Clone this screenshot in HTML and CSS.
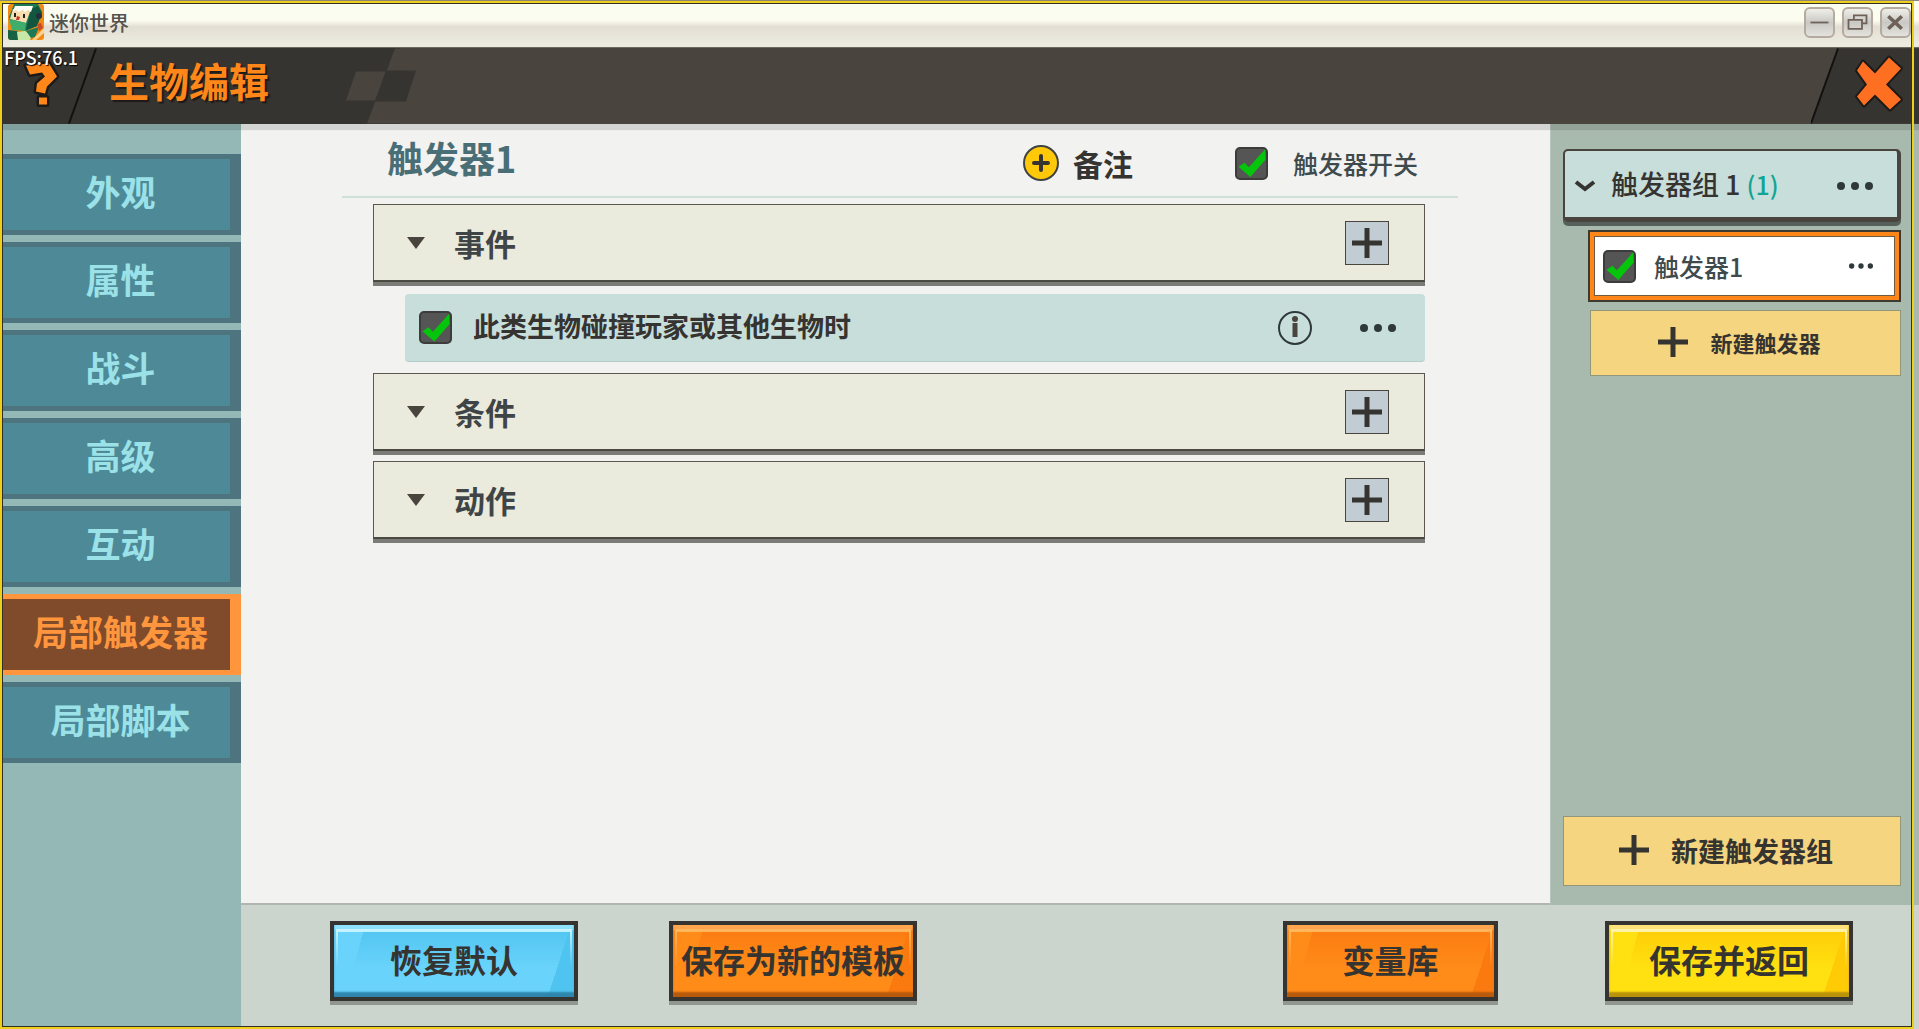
FILE: index.html
```
<!DOCTYPE html>
<html lang="zh-CN">
<head>
  <meta charset="UTF-8">
  <meta name="viewport" content="width=device-width, initial-scale=1.0">
  <title>迷你世界</title>
  <link rel="stylesheet" href="styles.css">
</head>
<body>
  <div class="window">
    <!-- Window title bar -->
    <div class="titlebar">
      <svg class="logo" viewBox="0 0 36 36" aria-hidden="true">
        <defs>
          <clipPath id="logo-clip"><rect width="36" height="36" rx="3"/></clipPath>
        </defs>
        <g clip-path="url(#logo-clip)">
          <rect width="36" height="36" fill="#f08a12"/>
          <path d="M6 0H30L34 8L29 22L18 27L4 21L1 13Z" fill="#1d7a55"/>
          <path d="M23 5L30 2L34 9L29 22L18 26Z" fill="#12563f"/>
          <path d="M5 5L23 5L18 19L2 15Z" fill="#f7deb0"/>
          <path d="M7 2L25 2L23 8L20 6L17 8L14 6L11 8L8 6L5 7Z" fill="#fffdf5"/>
          <path d="M6 9h2v4h-2zM15 10h2v4h-2z" fill="#222"/>
          <path d="M9 12l3 1l-1 3h-3z" fill="#c53a28"/>
          <path d="M1 15L18 19L17 27L4 26Z" fill="#3fae6b"/>
          <path d="M0 26L9 27L12 36H0Z" fill="#176245"/>
          <path d="M9 28L17 27L24 31L22 36H10Z" fill="#c8e8a8"/>
          <path d="M18 27L31 23L27 33L23 34Z" fill="#1d7a55"/>
          <path d="M29 20l4-1l2 5l-4 3z" fill="#c94b2a"/>
          <path d="M36 24L24 36H28L36 29Z" fill="#ffd08a"/>
          <circle cx="31" cy="12" r="3" fill="#20303c"/>
        </g>
      </svg>
      <span class="app-name">迷你世界</span>
      <div class="window-controls">
        <button class="win-btn" type="button" aria-label="最小化">
          <svg viewBox="0 0 30 30"><path d="M5 15h20" stroke-width="2"/></svg>
        </button>
        <button class="win-btn" type="button" aria-label="还原">
          <svg viewBox="0 0 30 30"><path d="M11 12V7h14v9h-4M5 12h15v10H5z" stroke-width="2"/></svg>
        </button>
        <button class="win-btn" type="button" aria-label="关闭窗口">
          <svg viewBox="0 0 30 30"><path d="M7 8l15 14M22 8L7 22" stroke-width="4"/></svg>
        </button>
      </div>
    </div>

    <!-- Page header -->
    <header class="header">
      <button class="help-btn" type="button" aria-label="帮助">
        <svg viewBox="0 0 90 75">
          <path d="M92 0L65 75" stroke="#12110f" stroke-width="2"/>
          <path d="M22 17L45 15L53 28L43 38L41 45L32 43L33 35L41 28L38 24L26 26ZM35 49h8v7h-8z" fill="#ff8619" stroke="#1c1b18" stroke-width="5" paint-order="stroke" stroke-linejoin="round"/>
        </svg>
      </button>
      <span class="fps">FPS:76.1</span>
      <h1 class="page-title">生物编辑</h1>
      <svg class="header-deco" viewBox="0 0 120 75" aria-hidden="true">
        <path d="M70 0H120V75H42Z" fill="#49453e"/>
        <path d="M31 23H61L50 52H21Z" fill="#49453e"/>
        <path d="M61 22H91L81 53H50Z" fill="#363430"/>
      </svg>
      <button class="close-btn" type="button" aria-label="关闭">
        <svg viewBox="0 0 108 75">
          <path d="M27 0H108V75H0Z" fill="#363430"/>
          <path d="M27 0L0 75" stroke="#12110f" stroke-width="2"/>
          <path d="M52 13L64 25L78 9L90 20L75 36L90 51L79 61L64 46L53 57L46 48L56 36L46 22Z" fill="#ff6f22" stroke="#1c1b18" stroke-width="4" paint-order="stroke" stroke-linejoin="round"/>
        </svg>
      </button>
    </header>

    <div class="body">
      <nav class="sidebar">
        <button class="tab" type="button">外观</button>
        <button class="tab" type="button">属性</button>
        <button class="tab" type="button">战斗</button>
        <button class="tab" type="button">高级</button>
        <button class="tab" type="button">互动</button>
        <button class="tab active" type="button">局部触发器</button>
        <button class="tab" type="button">局部脚本</button>
      </nav>

      <div class="workspace">
        <main class="editor">
          <div class="editor-head">
            <h2>触发器1</h2>
            <button class="note-btn" type="button">
              <svg viewBox="0 0 36 36" aria-hidden="true">
                <circle cx="18" cy="18" r="17" fill="#ffc90a" stroke="#3f4442" stroke-width="2"/>
                <path d="M18 11v14M11 18h14" stroke="#363430" stroke-width="4" stroke-linecap="round"/>
              </svg>
              备注
            </button>
            <label class="switch">
              <input class="check" type="checkbox" checked>
              触发器开关
            </label>
          </div>

          <div class="sections">
            <section class="section">
              <button class="toggle" type="button"><span class="arrow"></span>事件</button>
              <button class="add-btn" type="button" aria-label="添加事件">
                <svg viewBox="0 0 30 30"><path d="M15 0v30M0 15h30"/></svg>
              </button>
            </section>
            <div class="entry">
              <label>
                <input class="check" type="checkbox" checked>
                <span>此类生物碰撞玩家或其他生物时</span>
              </label>
              <button class="icon-btn" type="button" aria-label="说明">
                <svg class="info" viewBox="0 0 36 36">
                  <circle cx="18" cy="18" r="16" fill="none" stroke="#2f393b" stroke-width="2"/>
                  <path d="M18 13v14" stroke="#49453e" stroke-width="5"/>
                  <circle cx="18" cy="9" r="3" fill="#49453e"/>
                </svg>
              </button>
              <button class="icon-btn" type="button" aria-label="更多">
                <svg class="dots" viewBox="0 0 36 8"><circle cx="4" cy="4" r="4"/><circle cx="18" cy="4" r="4"/><circle cx="32" cy="4" r="4"/></svg>
              </button>
            </div>
            <section class="section">
              <button class="toggle" type="button"><span class="arrow"></span>条件</button>
              <button class="add-btn" type="button" aria-label="添加条件">
                <svg viewBox="0 0 30 30"><path d="M15 0v30M0 15h30"/></svg>
              </button>
            </section>
            <section class="section">
              <button class="toggle" type="button"><span class="arrow"></span>动作</button>
              <button class="add-btn" type="button" aria-label="添加动作">
                <svg viewBox="0 0 30 30"><path d="M15 0v30M0 15h30"/></svg>
              </button>
            </section>
          </div>
        </main>

        <aside class="groups">
          <div class="group">
            <button class="group-toggle" type="button">
              <svg class="chevron" viewBox="0 0 22 12" aria-hidden="true"><path d="M2 2l9 7l9-7"/></svg>
              <span>触发器组 1 <span class="count">(1)</span></span>
            </button>
            <button class="icon-btn" type="button" aria-label="更多">
              <svg class="dots" viewBox="0 0 36 8"><circle cx="4" cy="4" r="4"/><circle cx="18" cy="4" r="4"/><circle cx="32" cy="4" r="4"/></svg>
            </button>
          </div>
          <div class="trigger">
            <label>
              <input class="check" type="checkbox" checked>
              触发器1
            </label>
            <button class="icon-btn" type="button" aria-label="更多">
              <svg class="dots small" viewBox="0 0 36 8"><circle cx="4" cy="4" r="4"/><circle cx="18" cy="4" r="4"/><circle cx="32" cy="4" r="4"/></svg>
            </button>
          </div>
          <button class="new-btn new-trigger" type="button">
            <svg viewBox="0 0 30 30" aria-hidden="true"><path d="M15 0v30M0 15h30"/></svg>
            新建触发器
          </button>
          <button class="new-btn new-group" type="button">
            <svg viewBox="0 0 30 30" aria-hidden="true"><path d="M15 0v30M0 15h30"/></svg>
            新建触发器组
          </button>
        </aside>

        <footer class="footer">
          <button class="action blue" type="button"><span>恢复默认</span></button>
          <button class="action orange" type="button"><span>保存为新的模板</span></button>
          <button class="action orange narrow" type="button"><span>变量库</span></button>
          <button class="action yellow" type="button"><span>保存并返回</span></button>
        </footer>
      </div>
    </div>

    <div class="frame"></div>
  </div>
</body>
</html>
```
FILE: styles.css
```
* {
  margin: 0;
  padding: 0;
  box-sizing: border-box;
}

body {
  font-family: "Noto Sans CJK SC", sans-serif;
  font-weight: 700;
  color: #363430;
}

button {
  border: none;
  background: none;
  font: inherit;
  color: inherit;
  cursor: pointer;
}

svg {
  display: block;
}

.window {
  position: relative;
  display: flex;
  flex-direction: column;
  min-height: 100vh;
  border-top: 1px solid #8f8478;
  background: #cbd4cd;
}

/* Highlight frame drawn over the whole window */
.frame {
  position: absolute;
  z-index: 2;
  inset: 0 5px 0 0;
  border: 2px solid #ecd01c;
  box-shadow: inset 0 0 0 1px #33302a;
  pointer-events: none;
}

/* Title bar */
.titlebar {
  display: flex;
  align-items: center;
  height: 47px;
  padding: 0 8px 4px 8px;
  background: linear-gradient(#fbfdf0 0 42%, #e3ded4 56%, #edebe0 94%);
  border-bottom: 1px solid #6d6a60;
}

.logo {
  width: 36px;
  height: 36px;
}

.app-name {
  margin-left: 5px;
  font-size: 20px;
  font-weight: 500;
  color: #55534e;
}

.window-controls {
  display: flex;
  gap: 7px;
  margin-left: auto;
}

.win-btn {
  width: 31px;
  height: 31px;
  border: 2px solid #b5aaa0;
  border-radius: 6px;
  background: linear-gradient(#f0eee8, #c9c8c4 50%, #e4e2dc);
}

.win-btn svg {
  width: 27px;
  height: 27px;
  fill: none;
  stroke: #6e6258;
}

/* Header */
.header {
  position: relative;
  z-index: 1;
  display: flex;
  align-items: center;
  height: 76px;
  background: linear-gradient(90deg, #363430 0 400px, #49453e 400px);
  box-shadow: 0 6px 1px rgba(0, 0, 0, 0.12);
}

.help-btn {
  width: 94px;
  height: 76px;
}

.help-btn svg {
  width: 90px;
  height: 76px;
  margin-left: 4px;
  overflow: visible;
}

.fps {
  position: absolute;
  top: 0;
  left: 4px;
  font-size: 18px;
  line-height: 18px;
  font-weight: 500;
  color: #fff;
  text-shadow: 1px 1px 1px #000;
}

.page-title {
  margin: 0 0 12px 15px;
  font-size: 40px;
  line-height: 48px;
  color: #ff8619;
  text-shadow: 2px 2px 1px #1c1b18;
}

.header-deco {
  width: 120px;
  height: 76px;
  margin-left: 56px;
}

.close-btn {
  width: 108px;
  height: 76px;
  margin-left: auto;
}

.close-btn svg {
  width: 108px;
  height: 76px;
}

/* Body */
.body {
  flex: 1;
  display: flex;
}

.sidebar {
  display: flex;
  flex-direction: column;
  gap: 7px;
  width: 241px;
  padding: 30px 0 0 3px;
  background: #93b8b6;
}

.tab {
  height: 81px;
  padding: 0 0 8px 8px;
  border: solid #4e757f;
  border-width: 5px 11px 5px 0;
  background: #4d8997;
  font-size: 35px;
  line-height: 48px;
  color: #9be1e8;
}

.tab.active {
  border-color: #ff963e;
  background: #804b2b;
  color: #ff963e;
}

.workspace {
  flex: 1;
  display: grid;
  grid-template-columns: 1fr 369px;
  grid-template-rows: 1fr 124px;
}

/* Trigger editor */
.editor {
  padding: 0 92px 0 101px;
  background: #f2f2f1;
  border-bottom: 2px solid #b1b5b2;
}

.editor-head {
  display: flex;
  align-items: center;
  height: 74px;
  padding: 6px 40px 0 45px;
  border-bottom: 2px solid #d0e2d7;
}

.editor-head h2 {
  margin: 0 auto 12px 0;
  font-size: 36px;
  line-height: 48px;
  color: #4a6e76;
}

.note-btn {
  display: flex;
  align-items: center;
  gap: 14px;
  margin-right: 102px;
  font-size: 30px;
  line-height: 36px;
}

.note-btn svg {
  width: 36px;
  height: 36px;
}

.switch {
  display: flex;
  align-items: center;
  gap: 25px;
  font-size: 25px;
  line-height: 36px;
  font-weight: 500;
  color: #3f4a4d;
}

.check {
  flex: none;
  appearance: none;
  position: relative;
  width: 33px;
  height: 33px;
  border: 2px solid #3c3c3c;
  border-radius: 5px;
  background: #555;
}

.check:checked::after {
  content: "";
  position: absolute;
  inset: 0;
  background: #04c40c;
  clip-path: polygon(5% 63%, 26% 49%, 41% 65%, 97% 3%, 99% 38%, 46% 98%);
}

.sections {
  padding: 6px 33px 0 31px;
}

.section {
  display: flex;
  align-items: center;
  justify-content: space-between;
  height: 78px;
  margin-bottom: 10px;
  padding: 0 35px 0 33px;
  border: 1px solid #5b564e;
  border-bottom: 2px solid #4a4a40;
  background: #eaebdc;
  box-shadow: 0 4px 0 #7b7b78;
}

.toggle {
  display: flex;
  align-items: center;
  gap: 29px;
  font-size: 31px;
  line-height: 48px;
  color: #3f4547;
}

.arrow {
  border: solid transparent;
  border-width: 12px 9px 0;
  border-top-color: #49453e;
}

.add-btn {
  display: grid;
  place-items: center;
  width: 44px;
  height: 44px;
  border: 1px solid #49453e;
  background: #c1cdd2;
}

.add-btn svg,
.new-btn svg {
  width: 30px;
  height: 30px;
  stroke: #363430;
  stroke-width: 5;
}

.entry {
  display: flex;
  align-items: center;
  height: 68px;
  margin: 12px 0 11px 32px;
  padding: 0 29px 0 14px;
  border-bottom: 1px solid #b5cdca;
  border-radius: 4px;
  background: #c8dedb;
}

.entry label {
  display: flex;
  align-items: center;
  gap: 21px;
  margin-right: auto;
  font-size: 27px;
  line-height: 36px;
}

.entry label span {
  padding-bottom: 4px;
}

.entry .icon-btn + .icon-btn {
  margin-left: 47px;
}

.info {
  width: 36px;
  height: 36px;
}

.dots {
  width: 36px;
  height: 8px;
  fill: #2f393b;
}

.dots.small {
  width: 24px;
}

/* Trigger groups */
.groups {
  display: flex;
  flex-direction: column;
  padding: 25px 18px 19px 12px;
  background: #a8baae;
  border-left: 1px solid #b7c6bc;
}

.group {
  display: flex;
  align-items: center;
  justify-content: space-between;
  height: 73px;
  padding: 4px 24px 0 9px;
  border: 2px solid #49453e;
  border-right-width: 4px;
  border-bottom-width: 5px;
  border-radius: 5px;
  background: #c8dedb;
  box-shadow: 0 4px 0 #56605a;
}

.group-toggle {
  display: flex;
  align-items: center;
  gap: 15px;
  font-size: 27px;
  line-height: 36px;
  font-weight: 500;
}

.group-toggle > span {
  padding-bottom: 4px;
}

.count {
  font-size: 25px;
  color: #12a594;
}

.chevron {
  width: 22px;
  height: 12px;
  fill: none;
  stroke: #363430;
  stroke-width: 4;
}

.trigger {
  display: flex;
  align-items: center;
  justify-content: space-between;
  height: 72px;
  margin: 8px 0 8px 25px;
  padding: 0 26px 0 8px;
  border: 2px solid #3d3a31;
  background: #fff;
  box-shadow: inset 0 0 0 4px #ff8619, inset 0 0 0 5px #6f5a40;
}

.trigger label {
  display: flex;
  align-items: center;
  gap: 18px;
  padding-left: 5px;
  font-size: 25px;
  line-height: 36px;
  font-weight: 500;
  color: #3f4a4d;
}

.new-btn {
  display: flex;
  align-items: center;
  justify-content: center;
  gap: 22px;
  padding: 0 12px 2px 0;
  border: 1px solid #93977a;
  background: #f5d57f;
}

.new-trigger {
  height: 66px;
  margin-left: 27px;
  font-size: 22px;
}

.new-group {
  height: 70px;
  margin-top: auto;
  font-size: 27px;
}

/* Bottom actions */
.footer {
  grid-column: 1 / -1;
  display: flex;
  align-items: flex-start;
  padding: 16px 66px 0 89px;
  background: #cbd4cd;
}

.action {
  position: relative;
  width: 248px;
  height: 80px;
  padding-bottom: 5px;
  border: 4px solid #363430;
  box-shadow: 0 4px 0 #8f9790;
  font-size: 32px;
  line-height: 48px;
  white-space: nowrap;
}

.action + .action {
  margin-left: 91px;
}

.action.narrow {
  width: 215px;
  margin-left: auto;
}

.action.narrow + .action {
  margin-left: 107px;
}

/* Glossy face, lit from the top corners */
.action::before {
  content: "";
  position: absolute;
  inset: 0;
  background:
    linear-gradient(105deg, var(--face) 0 12%, transparent 12%),
    linear-gradient(108deg, transparent 0 90%, var(--top) 90%),
    linear-gradient(var(--top), var(--face) 60%);
  box-shadow: inset 0 -5px 2px var(--low), inset 0 5px 2px var(--shine);
}

.action::after {
  content: "";
  position: absolute;
  inset: 4px 2px 30px;
  border: solid var(--edge);
  border-width: 3px 2px 0;
  mask: linear-gradient(#000, transparent);
}

.action span {
  position: relative;
  z-index: 1;
}

.blue {
  --face: #69d3fb;
  --top: #4fc4f0;
  --low: #2e86ad;
  --shine: #8fe2fb;
  --edge: #c8f4ff;
}

.orange {
  --face: #ff8b19;
  --top: #fb7a10;
  --low: #b85a0c;
  --shine: #ffa64e;
  --edge: #ffb860;
}

.yellow {
  --face: #ffe010;
  --top: #ffcb06;
  --low: #b9920a;
  --shine: #ffe37a;
  --edge: #fff3b0;
}
```
